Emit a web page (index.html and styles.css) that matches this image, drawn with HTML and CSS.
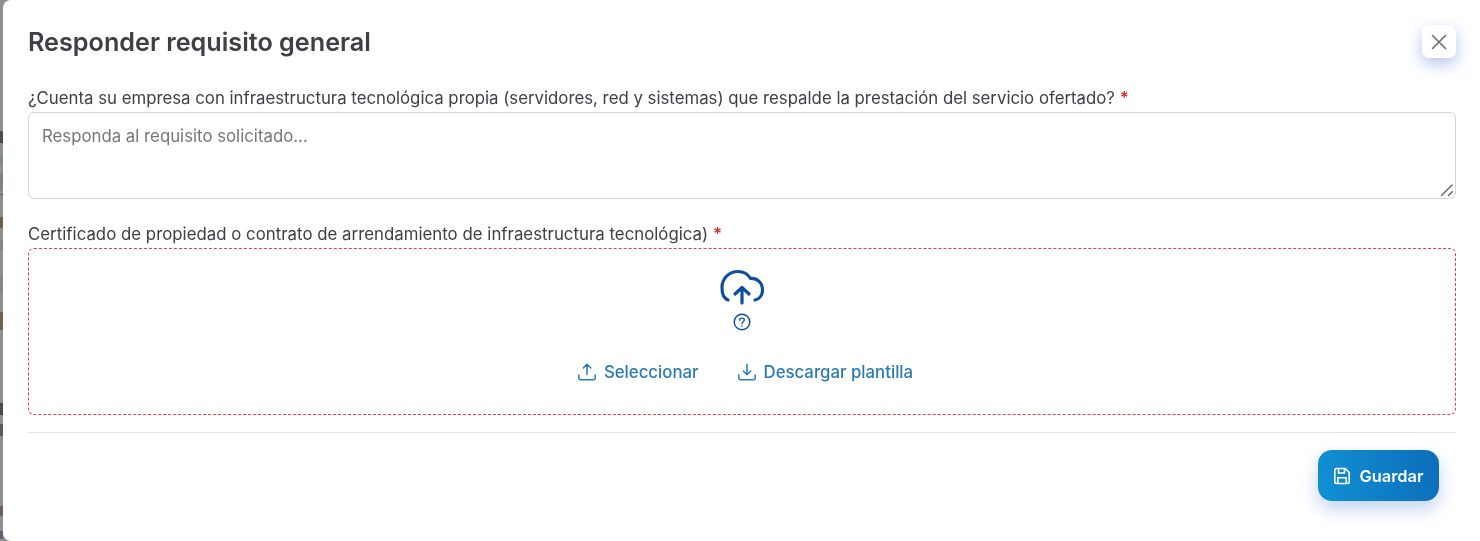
FILE: index.html
```html
<!DOCTYPE html>
<html lang="es">
<head>
<meta charset="utf-8">
<title>Responder requisito general</title>
<link rel="stylesheet" href="styles.css">
</head>
<body>
<div class="backdrop">
  <i class="frag f1"></i><i class="frag f2"></i><i class="frag f3"></i><i class="frag f4"></i>
  <i class="frag f5"></i><i class="frag f6"></i><i class="frag f7"></i><i class="frag f8"></i>
  <i class="frag f9"></i><i class="frag f10"></i><i class="frag f11"></i><i class="frag f12"></i>
</div>
<div class="modal">
  <header class="modal-head">
    <h1 class="title">Responder requisito general</h1>
    <button class="close" type="button" aria-label="Cerrar">
      <svg width="20" height="20" viewBox="0 0 20 20" fill="none" stroke="#6b6b74" stroke-width="1.6" stroke-linecap="round"><path d="M3.5 3.5l13 13M16.5 3.5l-13 13"/></svg>
    </button>
  </header>
  <div class="field">
    <label class="label">¿Cuenta su empresa con infraestructura tecnológica propia (servidores, red y sistemas) que respalde la prestación del servicio ofertado? <span class="req">*</span></label>
    <div class="area-wrap">
      <textarea class="area" placeholder="Responda al requisito solicitado..."></textarea>
      <svg class="grip" width="14" height="14" viewBox="0 0 14 14" fill="none" stroke="#5f5f5f" stroke-width="1.4" stroke-linecap="round"><path d="M1.500 12.500L12 2M8.500 12.500L12.500 8.500"/></svg>
    </div>
  </div>
  <div class="field field-file">
    <label class="label label-wide">Certificado de propiedad o contrato de arrendamiento de infraestructura tecnológica) <span class="req">*</span></label>
    <div class="drop">
      <svg class="cloud" width="44" height="36" viewBox="0 0 44 36" fill="none" stroke="#0b4f9e" stroke-width="3.2" stroke-linecap="round" stroke-linejoin="round"><path d="M8 31C4 29.500 2 24 2 18.500C2 9 9.500 2.500 18 2.500C23.500 2.500 28 5.200 30.500 9.500C37.500 9 42.500 14 42.500 21C42.500 26 39.500 30 35 31"/><path d="M22 34V18.500M15 25L22 18.500L29 25"/></svg>
      <svg class="help" width="18" height="18" viewBox="0 0 18 18" fill="none" stroke="#0b4f9e" stroke-width="1.4" stroke-linecap="round"><circle cx="9" cy="9" r="7.8"/><path d="M6.700 7.200C6.700 5.900 7.700 5.100 9 5.100C10.300 5.100 11.300 5.900 11.300 7.100C11.300 8.700 9 8.800 9 10.500"/><path d="M9 12.800v.1"/></svg>
      <div class="actions">
        <a class="act">
          <svg width="20" height="20" viewBox="0 0 20 20" fill="none" stroke="currentColor" stroke-width="1.5" stroke-linecap="round" stroke-linejoin="round"><path d="M10 12.500V2.500M6.200 6L10 2.300L13.800 6"/><path d="M1.800 13v2.800C1.800 17 2.700 17.800 3.800 17.800H16.200C17.300 17.800 18.200 17 18.200 15.800V13"/></svg>
          Seleccionar
        </a>
        <a class="act">
          <svg width="20" height="20" viewBox="0 0 20 20" fill="none" stroke="currentColor" stroke-width="1.5" stroke-linecap="round" stroke-linejoin="round"><path d="M10 2.300V12.500M6.200 9L10 12.700L13.800 9"/><path d="M1.800 13v2.800C1.800 17 2.700 17.800 3.800 17.800H16.200C17.300 17.800 18.200 17 18.200 15.800V13"/></svg>
          Descargar plantilla
        </a>
      </div>
    </div>
  </div>
  <hr class="rule">
  <footer class="foot">
    <button class="save" type="button">
      <svg width="18" height="18" viewBox="0 0 18 18" fill="none" stroke="#fff" stroke-width="1.6" stroke-linecap="round" stroke-linejoin="round"><path d="M1.800 3.200C1.800 2.200 2.500 1.500 3.400 1.500H12.200L16.200 5.300V14.800C16.200 15.800 15.500 16.500 14.600 16.500H3.400C2.500 16.500 1.800 15.800 1.800 14.800Z"/><path d="M5.500 1.800V6H11.500V1.800"/><path d="M4.800 16.300V10.800H13.200V16.300"/></svg>
      Guardar
    </button>
  </footer>
</div>
</body>
</html>
```
FILE: styles.css
```css
* { box-sizing: border-box; }
html, body { margin: 0; height: 100%; overflow: hidden; }
body {
  background: #fff;
  font-family: Inter, "Liberation Sans", sans-serif;
  color: #3f4045;
  display: flex;
  justify-content: flex-end;
  height: 541px;
}
.backdrop { position: absolute; left: 0; top: 0; width: 12px; height: 541px; background: #8f8f8f; }
.frag { position: absolute; left: 0; width: 3px; }
.f1 { top: 131px; height: 12px; background: #4d4d4d; }
.f2 { top: 155px; height: 10px; background: #7f8c8c; }
.f3 { top: 173px; height: 18px; background: #7b8484; }
.f4 { top: 194px; height: 1px; background: #5d5d5d; }
.f5 { top: 217px; height: 11px; background: #6b5f50; }
.f6 { top: 240px; height: 10px; background: #858585; }
.f7 { top: 275px; height: 19px; background: #85878b; }
.f8 { top: 312px; height: 18px; background: #6e6350; }
.f9 { top: 403px; height: 12px; background: #4a4a4a; }
.f10 { top: 424px; height: 12px; background: #5b5b5b; }
.f11 { top: 506px; height: 10px; background: #6a5d63; }
.f12 { top: 531px; height: 8px; background: #5c6570; }
.modal {
  position: relative;
  width: 1477px;
  height: 541px;
  background: #fff;
  border-radius: 8px 0 0 8px;
  padding: 0 24px 0 25px;
  display: flex;
  flex-direction: column;
  will-change: transform;
}
.modal-head {
  height: 84px;
  display: flex;
  align-items: flex-start;
  justify-content: space-between;
  padding-top: 25px;
}
.title { margin: 0; font-size: 25.2px; line-height: 35px; font-weight: 600; color: #3f4045; }
.close {
  width: 34px;
  height: 33px;
  border: 0;
  border-radius: 7px;
  background: #fff;
  display: flex;
  align-items: center;
  justify-content: center;
  padding: 0;
  box-shadow: 0 6px 16px rgba(60, 110, 210, .4);
}
.field { display: flex; flex-direction: column; }
.label { font-size: 16.8px; line-height: 28px; color: #3f4045; height: 28px; }
.label-wide { letter-spacing: .025px; }
.req { color: #d32f2f; font-weight: 600; }
.area-wrap { position: relative; display: flex; }
.area {
  flex: 1;
  height: 87px;
  border: 1px solid #d4d4d8;
  border-radius: 6px;
  padding: 12px 13px;
  font: 16.8px/22px Inter, "Liberation Sans", sans-serif;
  color: #3f4045;
  background: #fff;
  resize: none;
  outline: none;
}
.area::placeholder { color: #75767c; opacity: 1; }
.grip { position: absolute; right: 2px; bottom: 2px; pointer-events: none; }
.field-file { margin-top: 21px; }
.drop {
  height: 167px;
  border: 1px dashed #ef3b45;
  border-radius: 6px;
  display: flex;
  flex-direction: column;
  align-items: center;
  padding-top: 20px;
}
.help { margin-top: 8px; }
.actions { display: flex; gap: 38px; margin-top: 29px; padding-left: 6px; }
.act { display: flex; align-items: center; gap: 7px; color: #2a7ab5; font-size: 16.8px; font-weight: 500; line-height: 24px; }
.rule { margin: 17px 0 0; border: 0; border-top: 1px solid #e2e2e4; }
.foot { display: flex; justify-content: flex-end; padding: 17px 17px 0 0; }
.save {
  width: 121px;
  height: 51px;
  border: 0;
  border-radius: 14px;
  display: flex;
  align-items: center;
  justify-content: center;
  gap: 8px;
  color: #fff;
  font: 600 16.4px Inter, "Liberation Sans", sans-serif;
  background: linear-gradient(80deg, #1091d2, #0d6dbb);
  box-shadow: 0 8px 18px rgba(50, 110, 220, .3);
}
```
